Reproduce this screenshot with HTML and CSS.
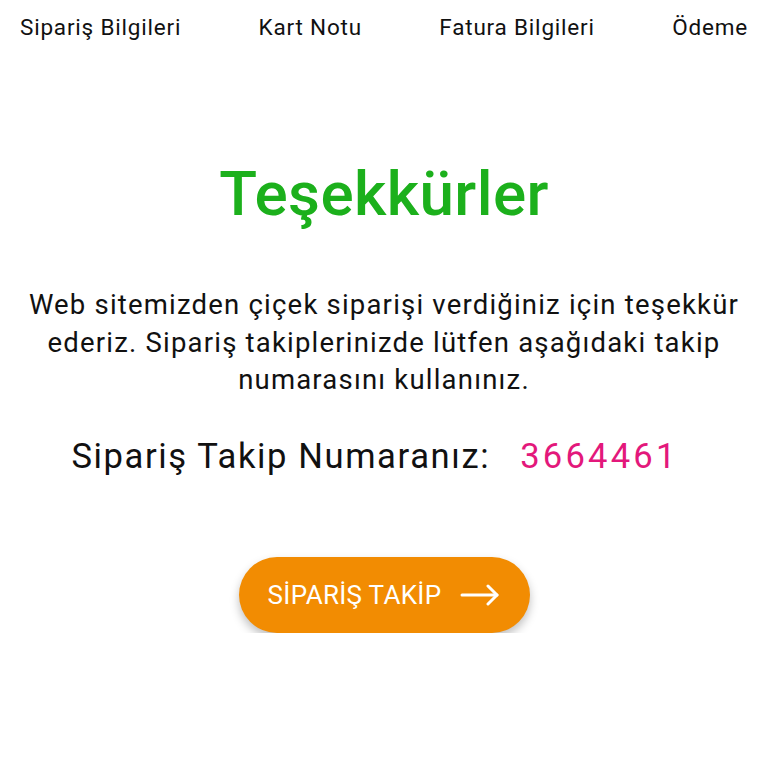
FILE: index.html
```html
<!DOCTYPE html>
<html lang="tr">
<head>
<meta charset="utf-8">
<link rel="stylesheet" href="styles.css">
</head>
<body>
<nav class="tabs">
  <span class="tab">Sipariş Bilgileri</span>
  <span class="tab">Kart Notu</span>
  <span class="tab">Fatura Bilgileri</span>
  <span class="tab">Ödeme</span>
</nav>
<main class="content">
  <h1 class="title">Teşekkürler</h1>
  <p class="message">Web sitemizden çiçek siparişi verdiğiniz için teşekkür ederiz. Sipariş takiplerinizde lütfen aşağıdaki takip numarasını kullanınız.</p>
  <div class="tracking">
    <span class="tracking-label">Sipariş Takip Numaranız:</span>
    <span class="tracking-number">3664461</span>
  </div>
  <button class="track-btn">
    <span>SİPARİŞ TAKİP</span>
    <svg class="arrow" width="40" height="22" viewBox="0 0 40 22" fill="none" stroke="#fff" stroke-width="3" stroke-linecap="round" stroke-linejoin="round">
      <path d="M2 11 H37"/>
      <path d="M28 2 L37 11 L28 20"/>
    </svg>
  </button>
</main>
</body>
</html>
```

FILE: styles.css
```css
* { box-sizing: border-box; }
html, body { margin: 0; padding: 0; background: #fff; }
body {
  font-family: Roboto, "Noto Sans", sans-serif;
  color: #111;
  width: 768px;
}
.tabs {
  display: flex;
  justify-content: space-between;
  padding: 12px 20px 0 20px;
  height: 54px;
}
.tab {
  font-size: 22.5px;
  letter-spacing: 0.8px;
  line-height: 30px;
  color: #111;
}
.content {
  display: flex;
  flex-direction: column;
  align-items: center;
}
.title {
  margin: 100px 0 0 0;
  font-size: 62px;
  font-weight: 500;
  letter-spacing: 0.4px;
  line-height: 80px;
  color: #1cb01c;
}
.message {
  margin: 52px 0 0 0;
  padding: 0 20px;
  font-size: 27.5px;
  letter-spacing: 1.2px;
  line-height: 37.5px;
  text-align: center;
}
.tracking {
  margin-top: 32px;
  padding-right: 18px;
  display: flex;
  gap: 30px;
  font-size: 34.6px;
  line-height: 50px;
}
.tracking-label { letter-spacing: 1.6px; }
.tracking-number { color: #e3187b; letter-spacing: 3.2px; }
.track-btn {
  margin-top: 76px;
  width: 291px;
  height: 76px;
  border: none;
  border-radius: 38px;
  background: #f28c02;
  color: #fff;
  font-family: Roboto, sans-serif;
  font-size: 26px;
  letter-spacing: 0.3px;
  display: flex;
  align-items: center;
  justify-content: center;
  gap: 19px;
  box-shadow: 0 5px 10px rgba(0,0,0,0.25);
  padding: 0;
}
.arrow { display: block; }
```
